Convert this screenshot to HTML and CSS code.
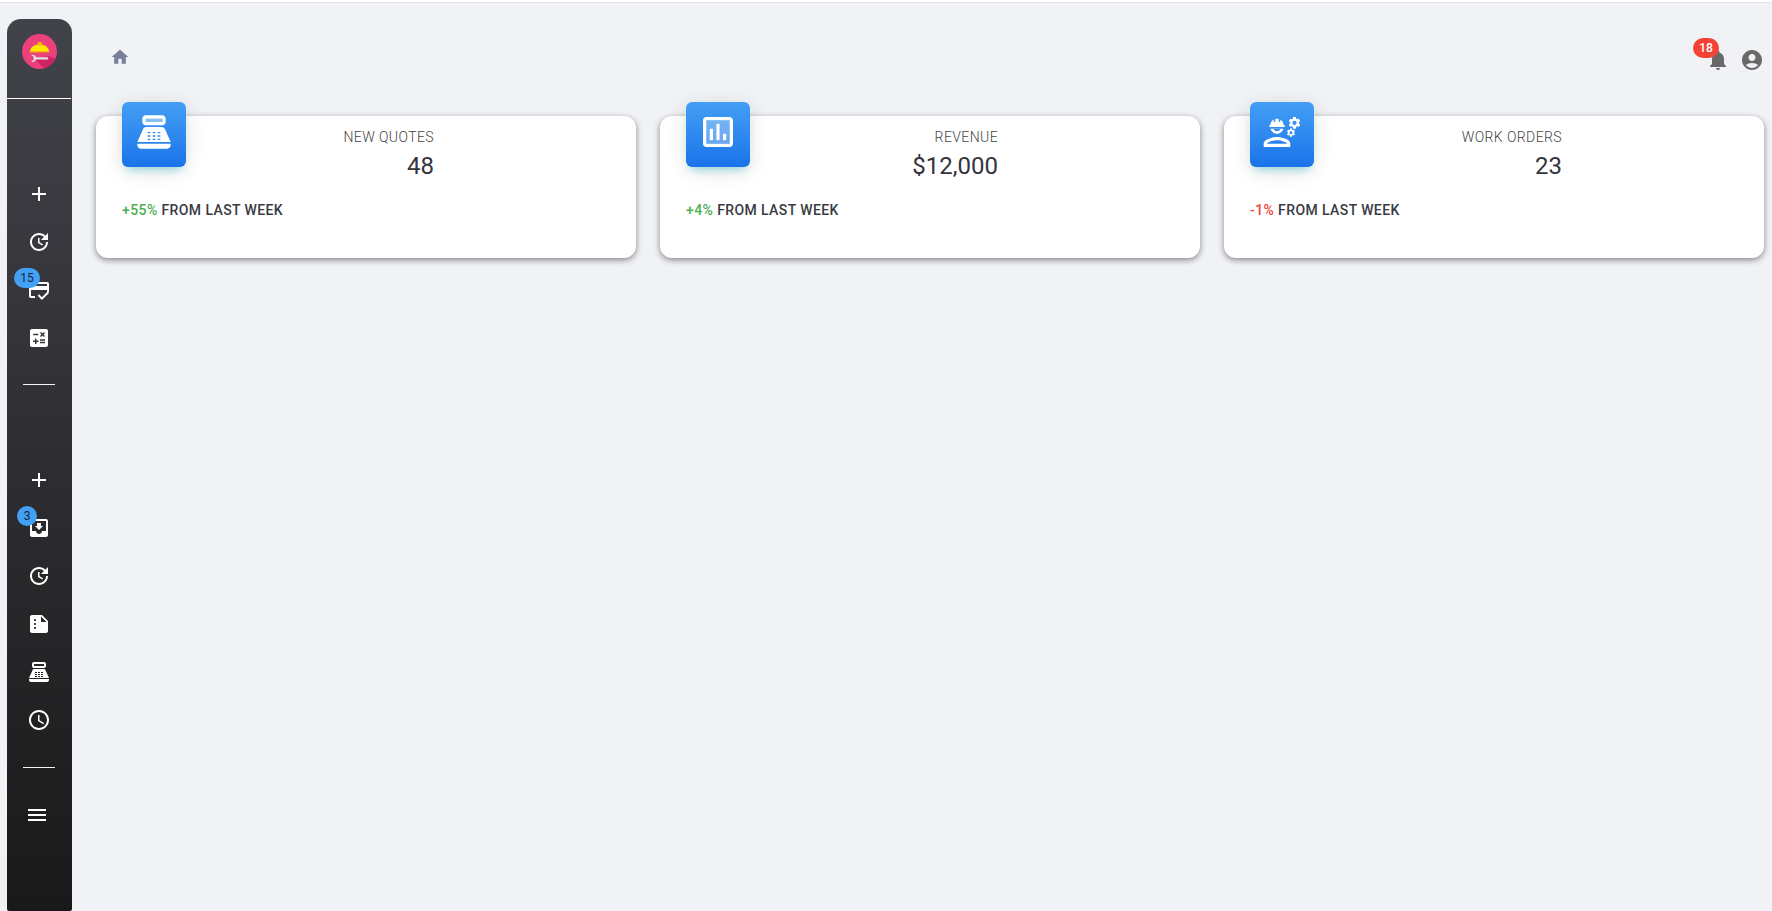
FILE: index.html
```html
<!DOCTYPE html>
<html lang="en">
<head>
<meta charset="utf-8">
<title>Dashboard</title>
<link rel="stylesheet" href="styles.css">
</head>
<body>
<div class="app">
  <aside class="sidebar">
    <div class="brand">
      <svg class="logo" viewBox="0 0 35 35" width="35" height="35" aria-hidden="true">
        <circle cx="17.5" cy="17.5" r="17.5" fill="#ec407a"/>
        <path d="M13 25 L26 22 L33.5 24.5 A17.5 17.5 0 0 1 22 34.4z" fill="#c2185b" opacity=".7"/>
        <path d="M8 17.2c.5-3.6 3.4-6.4 7.8-6.8V8.2h3.6v2.2c4.3.4 7.2 3.2 7.7 6.8z" fill="#ffe600"/>
        <path d="M15.8 8.2h3.6v3.4h-3.6z" fill="#f2b705"/>
        <path d="M8 17h19v1.4H8z" fill="#f2b705"/>
        <path d="M9 21c2.6-.5 4.4.4 5 2.2h11c.8 0 1.3.5 1.3 1.2s-.5 1.2-1.3 1.2H14c-.6 1.8-2.4 2.7-5 2.2l2.6-1.7v-3.4z" fill="#dfe0e6"/>
      </svg>
    </div>
    <hr class="rule-full">
    <nav class="group group-first">
      <a class="nav-item"><svg viewBox="0 0 24 24"><path d="M19 13h-6v6h-2v-6H5v-2h6V5h2v6h6v2z"/></svg></a>
      <a class="nav-item"><svg viewBox="0 0 24 24"><path d="M11 8v5l4.25 2.52.77-1.28-3.52-2.09V8H11zm10 2V3l-2.64 2.64C16.74 4.01 14.49 3 12 3c-4.97 0-9 4.03-9 9s4.03 9 9 9 9-4.03 9-9h-2c0 3.86-3.14 7-7 7s-7-3.14-7-7 3.14-7 7-7c1.93 0 3.68.79 4.95 2.05L14 10h7z"/></svg></a>
      <a class="nav-item"><svg viewBox="0 0 24 24"><path d="M20 4H4c-1.11 0-2 .89-2 2v12c0 1.11.89 2 2 2h4v-2H4v-6h16v2h2V6c0-1.11-.9-2-2-2zm0 4H4V6h16v2zm-5.07 11.17-2.83-2.83-1.41 1.41L14.93 22 22 14.93l-1.41-1.41-5.66 5.65z"/></svg><span class="badge badge-wide">15</span></a>
      <a class="nav-item"><svg viewBox="0 0 24 24"><path d="M19 3H5c-1.1 0-2 .9-2 2v14c0 1.1.9 2 2 2h14c1.1 0 2-.9 2-2V5c0-1.1-.9-2-2-2zm-5.97 4.06L14.09 6l1.41 1.41L16.91 6l1.06 1.06-1.41 1.41 1.41 1.41-1.06 1.06-1.41-1.4-1.41 1.41-1.06-1.06 1.41-1.41-1.41-1.42zm-6.78.66h5v1.5h-5v-1.5zM11.5 16h-2v2H8v-2H6v-1.5h2v-2h1.5v2h2V16zm6.5 1.25h-5v-1.5h5v1.5zm0-2.5h-5v-1.5h5v1.5z"/></svg></a>
    </nav>
    <hr class="rule-short">
    <nav class="group group-second">
      <a class="nav-item"><svg viewBox="0 0 24 24"><path d="M19 13h-6v6h-2v-6H5v-2h6V5h2v6h6v2z"/></svg></a>
      <a class="nav-item"><svg viewBox="0 0 24 24"><path fill-rule="evenodd" d="M19 3H5c-1.1 0-2 .9-2 2v14c0 1.1.9 2 2 2h14c1.1 0 2-.9 2-2V5c0-1.1-.9-2-2-2zm0 12h-4c0 1.66-1.35 3-3 3s-3-1.34-3-3H5V5h14v10z"/><path d="M16 10h-2V7h-4v3H8l4 4z"/></svg><span class="badge badge-round">3</span></a>
      <a class="nav-item"><svg viewBox="0 0 24 24"><path d="M11 8v5l4.25 2.52.77-1.28-3.52-2.09V8H11zm10 2V3l-2.64 2.64C16.74 4.01 14.49 3 12 3c-4.97 0-9 4.03-9 9s4.03 9 9 9 9-4.03 9-9h-2c0 3.86-3.14 7-7 7s-7-3.14-7-7 3.14-7 7-7c1.93 0 3.68.79 4.95 2.05L14 10h7z"/></svg></a>
      <a class="nav-item"><svg viewBox="0 0 24 24"><path d="M15 3H5c-1.1 0-1.99.9-1.99 2L3 19c0 1.1.89 2 1.99 2H19c1.1 0 2-.9 2-2V9l-6-6zM8 17c-.55 0-1-.45-1-1s.45-1 1-1 1 .45 1 1-.45 1-1 1zm0-4c-.55 0-1-.45-1-1s.45-1 1-1 1 .45 1 1-.45 1-1 1zm0-4c-.55 0-1-.45-1-1s.45-1 1-1 1 .45 1 1-.45 1-1 1zm6 1V4.5l5.5 5.5H14z"/></svg></a>
      <a class="nav-item"><svg viewBox="0 0 24 24"><path fill-rule="evenodd" d="M17 2H7c-1.1 0-2 .9-2 2v2c0 1.1.9 2 2 2h10c1.1 0 2-.9 2-2V4c0-1.1-.9-2-2-2zm0 4H7V4h10v2zm3 16H4c-1.1 0-2-.9-2-2v-1h20v1c0 1.1-.9 2-2 2zm-1.47-11.81C18.21 9.47 17.49 9 16.7 9H7.3c-.79 0-1.51.47-1.83 1.19L2 18h20zM8 12h2v1H8zm3 0h2v1h-2zm3 0h2v1h-2zM8 14h2v1H8zm3 0h2v1h-2zm3 0h2v1h-2zM8 16h2v1H8zm3 0h2v1h-2zm3 0h2v1h-2z"/></svg></a>
      <a class="nav-item"><svg viewBox="0 0 24 24"><path d="M11.99 2C6.47 2 2 6.48 2 12s4.47 10 9.99 10C17.52 22 22 17.52 22 12S17.52 2 11.99 2zM12 20c-4.42 0-8-3.58-8-8s3.58-8 8-8 8 3.58 8 8-3.58 8-8 8zm.5-13H11v6l5.25 3.15.75-1.23-4.5-2.67z"/></svg></a>
    </nav>
    <hr class="rule-short">
    <a class="nav-item nav-menu"><svg viewBox="0 0 24 24"><path d="M3 18h18v-2H3v2zm0-5h18v-2H3v2zm0-7v2h18V6H3z"/></svg></a>
  </aside>

  <main class="main">
    <header class="topbar">
      <svg class="home" viewBox="0 0 24 24"><path d="M10 20v-6h4v6h5v-8h3L12 3 2 12h3v8z"/></svg>
      <div class="actions">
        <span class="bell">
          <svg viewBox="0 0 24 24"><path d="M12 22c1.1 0 2-.9 2-2h-4c0 1.1.89 2 2 2zm6-6v-5c0-3.07-1.64-5.64-4.5-6.32V4c0-.83-.67-1.5-1.5-1.5s-1.5.67-1.5 1.5v.68C7.63 5.36 6 7.92 6 11v5l-2 2v1h16v-1l-2-2z"/></svg>
          <span class="badge-alert">18</span>
        </span>
        <svg viewBox="0 0 24 24"><path d="M12 2C6.48 2 2 6.48 2 12s4.48 10 10 10 10-4.48 10-10S17.52 2 12 2zm0 4c1.93 0 3.5 1.57 3.5 3.5S13.93 13 12 13s-3.5-1.57-3.5-3.5S10.07 6 12 6zm0 14c-2.03 0-4.43-.82-6.14-2.88C7.55 15.8 9.68 15 12 15s4.45.8 6.14 2.12C16.43 19.18 14.03 20 12 20z"/></svg>
      </div>
    </header>

    <section class="cards">
      <article class="card">
        <div class="card-top">
          <div class="card-icon">
            <svg viewBox="0 0 24 24">
              <path d="M7 4h10v2H7z" opacity=".4"/>
              <path fill-rule="evenodd" d="M17 2H7c-1.1 0-2 .9-2 2v2c0 1.1.9 2 2 2h10c1.1 0 2-.9 2-2V4c0-1.1-.9-2-2-2zm0 4H7V4h10v2zm3 16H4c-1.1 0-2-.9-2-2v-1h20v1c0 1.1-.9 2-2 2zm-1.47-11.81C18.21 9.47 17.49 9 16.7 9H7.3c-.79 0-1.51.47-1.83 1.19L2 18h20zM8.2 12h1.6v.8H8.2zm3 0h1.6v.8h-1.6zm3 0h1.6v.8h-1.6zM8.2 14h1.6v.8H8.2zm3 0h1.6v.8h-1.6zm3 0h1.6v.8h-1.6zM8.2 16h1.6v.8H8.2zm3 0h1.6v.8h-1.6zm3 0h1.6v.8h-1.6z"/>
            </svg>
          </div>
          <div class="card-data">
            <div class="card-label">NEW QUOTES</div>
            <div class="card-value">48</div>
          </div>
        </div>
        <p class="card-foot"><span class="up">+55%</span> FROM LAST WEEK</p>
      </article>

      <article class="card">
        <div class="card-top">
          <div class="card-icon">
            <svg viewBox="0 0 24 24">
              <path d="M5 5v14h14V5H5zm4 12H7v-7h2v7zm4 0h-2V7h2v10zm4 0h-2v-4h2v4z" opacity=".3"/>
              <path d="M3 5v14c0 1.1.9 2 2 2h14c1.1 0 2-.9 2-2V5c0-1.1-.9-2-2-2H5c-1.1 0-2 .9-2 2zm2 0h14v14H5V5zm2 5h2v7H7zm4-3h2v10h-2zm4 6h2v4h-2z"/>
            </svg>
          </div>
          <div class="card-data">
            <div class="card-label">REVENUE</div>
            <div class="card-value">$12,000</div>
          </div>
        </div>
        <p class="card-foot"><span class="up">+4%</span> FROM LAST WEEK</p>
      </article>

      <article class="card">
        <div class="card-top">
          <div class="card-icon">
            <svg viewBox="0 0 24 24">
              <path fill-rule="evenodd" d="M9 15c-2.67 0-8 1.34-8 4v2h16v-2c0-2.66-5.33-4-8-4zM3 19c.2-.72 3.3-2 6-2s5.8 1.28 6 2z"/>
              <path d="M4.74 9h8.53c.27 0 .49-.22.49-.49v-.02c0-.27-.22-.49-.49-.49H13c0-1.48-.81-2.75-2-3.45v.95c0 .28-.22.5-.5.5s-.5-.22-.5-.5V4.14C9.68 4.06 9.35 4 9 4s-.68.06-1 .14V5.5c0 .28-.22.5-.5.5S7 5.78 7 5.5v-.95C5.81 5.25 5 6.52 5 8h-.26c-.27 0-.49.22-.49.49v.03c0 .26.22.48.49.48z"/>
              <path fill-rule="evenodd" d="M9 13c1.86 0 3.41-1.28 3.86-3H5.14c.45 1.72 2 3 3.86 3zM7 10.2h4c-.4.9-1.1 1.3-2 1.3s-1.6-.4-2-1.3z"/>
              <path id="gear" fill-rule="evenodd" d="M22.1 6.84c.01-.11.02-.22.02-.34 0-.12-.01-.23-.03-.34l.74-.58c.07-.05.08-.15.04-.22l-.7-1.21c-.04-.08-.14-.1-.21-.08l-.86.35c-.18-.14-.38-.25-.59-.34l-.13-.93c-.02-.09-.09-.15-.17-.15h-1.4c-.09 0-.16.06-.17.15l-.14.93c-.21.09-.42.21-.59.34l-.87-.35c-.08-.03-.17 0-.21.08l-.7 1.21c-.04.08-.03.17.04.22l.74.58c-.02.11-.03.23-.03.34 0 .11.01.23.03.34l-.74.58c-.07.05-.08.15-.04.22l.7 1.21c.04.08.14.1.21.08l.87-.35c.18.14.38.25.59.34l.13.93c.01.09.08.15.16.15h1.4c.09 0 .16-.06.17-.15l.13-.93c.21-.09.42-.21.59-.34l.87.35c.08.03.17 0 .21-.08l.7-1.21c.04-.08.03-.17-.04-.22l-.73-.58zM19.5 7.75c-.69 0-1.25-.56-1.25-1.25s.56-1.25 1.25-1.25 1.25.56 1.25 1.25-.56 1.25-1.25 1.25z"/>
              <use href="#gear" transform="translate(17.4 12.4) scale(.7) translate(-19.5 -6.5)"/>
            </svg>
          </div>
          <div class="card-data">
            <div class="card-label">WORK ORDERS</div>
            <div class="card-value">23</div>
          </div>
        </div>
        <p class="card-foot"><span class="down">-1%</span> FROM LAST WEEK</p>
      </article>
    </section>
  </main>
</div>
</body>
</html>
```
FILE: styles.css
```css
* { box-sizing: border-box; }
html { margin: 0; height: 100%; overflow: hidden; background: #fff; }
body {
  margin: 2px 0 0;
  height: 909px;
  overflow: hidden;
  background: #f0f2f5;
  border-top: 1px solid #e1e3e6;
  font-family: Roboto, "Liberation Sans", sans-serif;
}
.app { display: flex; height: 908px; }

.sidebar {
  flex: 0 0 65px;
  margin: 16px 0 0 7px;
  height: 892px;
  border-radius: 14px 14px 2px 2px;
  background: linear-gradient(180deg, #42424a 0%, #191919 100%);
  display: flex;
  flex-direction: column;
  align-items: center;
}
.brand { height: 79px; width: 100%; display: flex; justify-content: center; padding-top: 15px; flex: none; }
.logo { display: block; }
.rule-full { width: 64px; height: 1px; margin: 0 1px 0 0; border: 0; background: #fff; flex: none; }
.rule-short { width: 32px; height: 1px; margin: 0 1px 0 0; border: 0; background: rgba(255,255,255,.95); flex: none; }
.group { display: flex; flex-direction: column; width: 100%; flex: none; }
.group-first { margin-top: 71px; margin-bottom: 22px; }
.group-second { margin-top: 71px; margin-bottom: 23px; }
.nav-item { position: relative; height: 48px; width: 100%; padding-right: 1px; display: flex; align-items: center; justify-content: center; flex: none; }
.nav-item svg { width: 24px; height: 24px; fill: #fff; display: block; }
.nav-menu { margin-top: 23px; padding-right: 5px; }

.badge {
  position: absolute;
  background: #42a0f5;
  color: #14263c;
  font-size: 12px;
  line-height: 20px;
  height: 20px;
  text-align: center;
  border-radius: 10px;
}
.badge-wide { left: 7px; top: 2px; width: 26px; }
.badge-round { left: 10px; top: 2px; width: 20px; }

.main { flex: 1; min-width: 0; padding: 0 8px 0 24px; }
.topbar { height: 113px; display: flex; justify-content: space-between; }
.home { width: 20px; height: 20px; fill: #7b809a; margin: 44px 0 0 14px; }
.actions { display: flex; gap: 10px; margin: 45px 0 0 0; fill: #696969; }
.actions svg { width: 24px; height: 24px; display: block; }
.bell { position: relative; display: block; height: 24px; }
.badge-alert {
  position: absolute;
  right: 11px;
  top: -10px;
  width: 26px;
  height: 20px;
  border-radius: 10px;
  background: #f44336;
  color: #fff;
  font-size: 12px;
  font-weight: 500;
  line-height: 20px;
  text-align: center;
}

.cards { display: grid; grid-template-columns: repeat(3, 540px); gap: 24px; }
.card {
  height: 142px;
  background: #fff;
  border-radius: 12px;
  box-shadow: 0 2px 6px rgba(0,0,0,.45);
  padding: 0 26px;
}
.card-top { display: flex; justify-content: space-between; height: 51px; }
.card-icon {
  width: 64px;
  height: 65px;
  margin-top: -14px;
  border-radius: 6px;
  background: linear-gradient(180deg, #449ff5 0%, #1a73e8 100%);
  box-shadow: 0 4px 20px rgba(0,0,0,.12), 0 7px 10px -5px rgba(0,188,212,.4);
  padding: 10px 12px 0;
  flex: none;
}
.card-icon svg { width: 40px; height: 40px; fill: #fff; display: block; }
.card-data { text-align: right; padding-top: 12px; margin-right: 176px; }
.card-label { font-size: 14px; font-weight: 300; line-height: 18px; color: #444; letter-spacing: .4px; }
.card-value { font-size: 24px; font-weight: 400; line-height: 28px; margin-top: 6px; color: #34343c; }
.card-foot { margin: 35px 0 0; font-size: 14px; font-weight: 500; line-height: 16px; color: #3a3a44; letter-spacing: .4px; }
.up { color: #4caf50; }
.down { color: #f44336; }
```
